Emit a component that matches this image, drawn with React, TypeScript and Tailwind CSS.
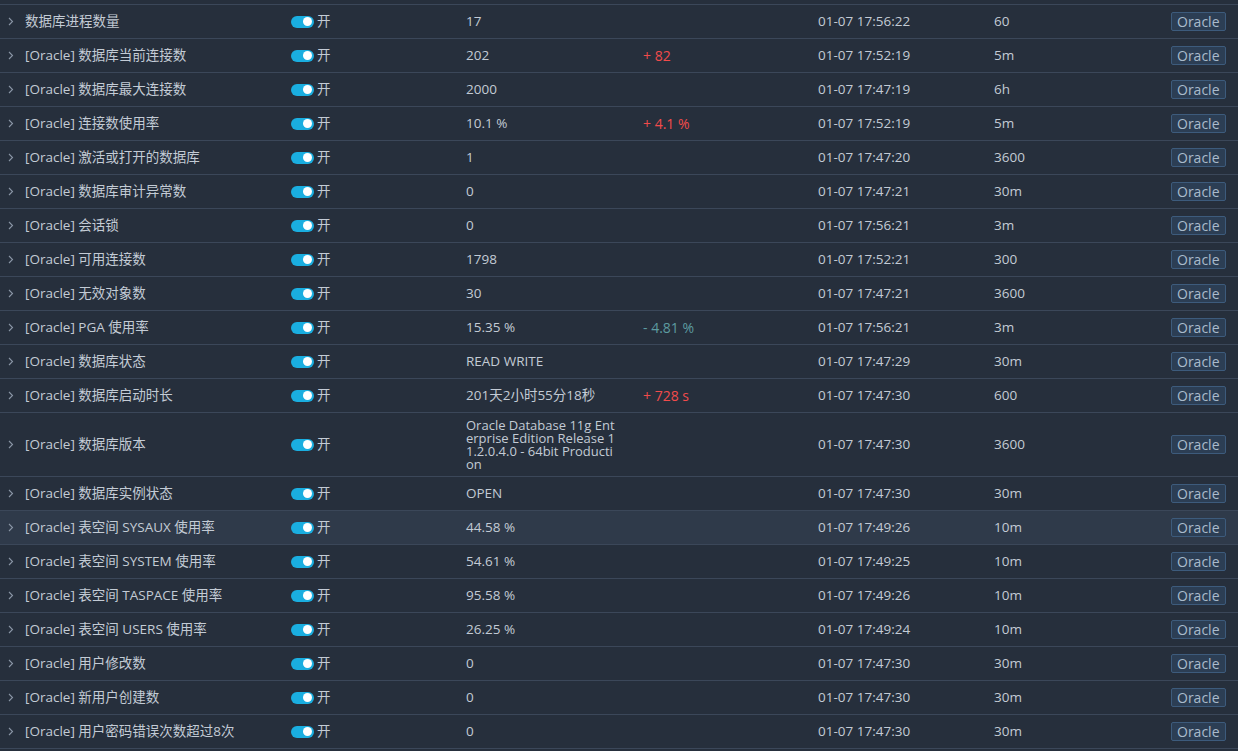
import React from "react";

type Row = {
  name: string;
  value: string;
  delta?: { text: string; up: boolean };
  time: string;
  interval: string;
  tall?: boolean;
  hl?: boolean;
};

const rows: Row[] = [
  { name: "数据库进程数量", value: "17", time: "01-07 17:56:22", interval: "60" },
  { name: "[Oracle] 数据库当前连接数", value: "202", delta: { text: "+ 82", up: true }, time: "01-07 17:52:19", interval: "5m" },
  { name: "[Oracle] 数据库最大连接数", value: "2000", time: "01-07 17:47:19", interval: "6h" },
  { name: "[Oracle] 连接数使用率", value: "10.1 %", delta: { text: "+ 4.1 %", up: true }, time: "01-07 17:52:19", interval: "5m" },
  { name: "[Oracle] 激活或打开的数据库", value: "1", time: "01-07 17:47:20", interval: "3600" },
  { name: "[Oracle] 数据库审计异常数", value: "0", time: "01-07 17:47:21", interval: "30m" },
  { name: "[Oracle] 会话锁", value: "0", time: "01-07 17:56:21", interval: "3m" },
  { name: "[Oracle] 可用连接数", value: "1798", time: "01-07 17:52:21", interval: "300" },
  { name: "[Oracle] 无效对象数", value: "30", time: "01-07 17:47:21", interval: "3600" },
  { name: "[Oracle] PGA 使用率", value: "15.35 %", delta: { text: "- 4.81 %", up: false }, time: "01-07 17:56:21", interval: "3m" },
  { name: "[Oracle] 数据库状态", value: "READ WRITE", time: "01-07 17:47:29", interval: "30m" },
  { name: "[Oracle] 数据库启动时长", value: "201天2小时55分18秒", delta: { text: "+ 728 s", up: true }, time: "01-07 17:47:30", interval: "600" },
  { name: "[Oracle] 数据库版本", value: "Oracle Database 11g Ent|erprise Edition Release 1|1.2.0.4.0 - 64bit Producti|on", time: "01-07 17:47:30", interval: "3600", tall: true },
  { name: "[Oracle] 数据库实例状态", value: "OPEN", time: "01-07 17:47:30", interval: "30m" },
  { name: "[Oracle] 表空间 SYSAUX 使用率", value: "44.58 %", time: "01-07 17:49:26", interval: "10m", hl: true },
  { name: "[Oracle] 表空间 SYSTEM 使用率", value: "54.61 %", time: "01-07 17:49:25", interval: "10m" },
  { name: "[Oracle] 表空间 TASPACE 使用率", value: "95.58 %", time: "01-07 17:49:26", interval: "10m" },
  { name: "[Oracle] 表空间 USERS 使用率", value: "26.25 %", time: "01-07 17:49:24", interval: "10m" },
  { name: "[Oracle] 用户修改数", value: "0", time: "01-07 17:47:30", interval: "30m" },
  { name: "[Oracle] 新用户创建数", value: "0", time: "01-07 17:47:30", interval: "30m" },
  { name: "[Oracle] 用户密码错误次数超过8次", value: "0", time: "01-07 17:47:30", interval: "30m" },
];

function Chevron() {
  return (
    <svg width="6" height="9" viewBox="0 0 6 9" className="text-[#8a96a6]">
      <path d="M1 1 L4.5 4.5 L1 8" fill="none" stroke="currentColor" strokeWidth="1.1" />
    </svg>
  );
}

function Toggle() {
  return (
    <div className="flex items-center gap-[3px]">
      <div className="w-[23px] h-[12px] rounded-full bg-[#1aaee0] flex items-center justify-end pr-[2px]">
        <div className="w-[9px] h-[9px] rounded-full bg-white" />
      </div>
      <span className="text-[#c3cbd5]">开</span>
    </div>
  );
}

export default function App() {
  return (
    <div
      className="w-[1238px] h-[751px] overflow-hidden bg-[#262f3c] text-[13.5px] text-[#c3cbd5]"
      style={{ fontFamily: '"Open Sans", "Noto Sans CJK SC", sans-serif' }}
    >
      <div className="h-[4px]" />
      {rows.map((r, i) => (
        <div
          key={i}
          className={`flex items-center border-t-[1.5px] border-[#3b4759] ${r.tall ? "h-[64px]" : "h-[34px]"} ${r.hl ? "bg-[#2f3a4a]" : ""}`}
        >
          <div className="w-[25px] shrink-0 pl-[8px] flex items-center">
            <Chevron />
          </div>
          <div className="w-[266px] shrink-0 whitespace-nowrap">{r.name}</div>
          <div className="w-[175px] shrink-0">
            <Toggle />
          </div>
          <div className="w-[177px] shrink-0">
            {r.tall ? (
              <div className="flex flex-col text-[13px] leading-[13px] pt-[1px]">
                {r.value.split("|").map((l, j) => (
                  <span key={j} className="whitespace-nowrap">{l}</span>
                ))}
              </div>
            ) : (
              <span>{r.value}</span>
            )}
          </div>
          <div className="w-[175px] shrink-0">
            {r.delta && (
              <span className={`text-[14px] ${r.delta.up ? "text-[#f24b4b]" : "text-[#5d9ba0]"}`}>{r.delta.text}</span>
            )}
          </div>
          <div className="w-[176px] shrink-0">{r.time}</div>
          <div className="w-[177px] shrink-0">{r.interval}</div>
          <div className="flex-1 flex justify-end pr-[13px]">
            <span className="h-[19px] px-[5px] flex items-center border border-[#3d5b7c] bg-[#2c3e54] rounded-[2px] text-[#a9bbcc] text-[14px] leading-none">
              Oracle
            </span>
          </div>
        </div>
      ))}
      <div className="border-t-[1.5px] border-[#3b4759]" />
    </div>
  );
}
